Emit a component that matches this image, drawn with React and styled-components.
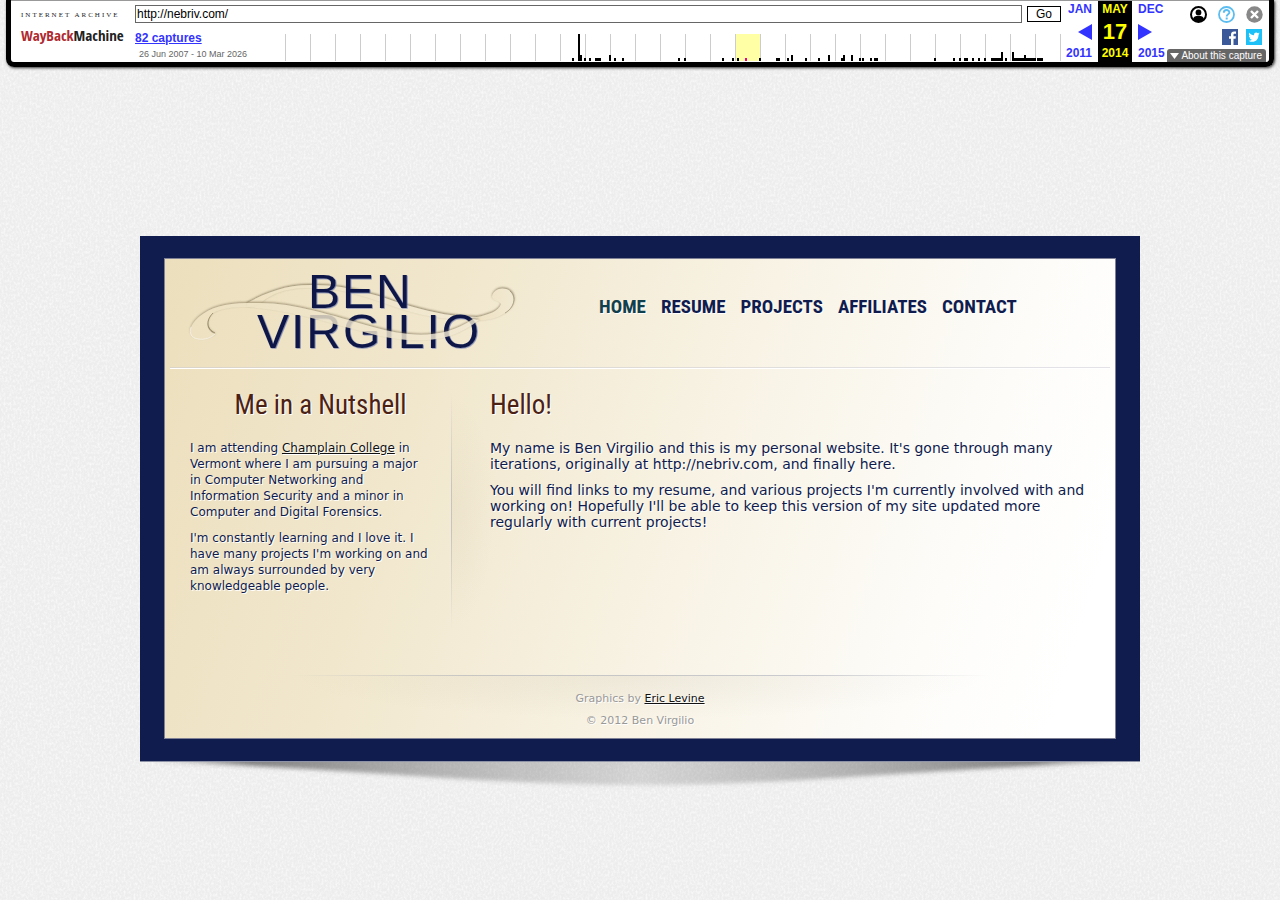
import styled, { createGlobalStyle, css } from "styled-components";

const GlobalStyle = createGlobalStyle`
  * {
    box-sizing: border-box;
  }

  body {
    margin: 0;
    background: #ededed;
    color: #0f1b4c;
    font-family: Verdana, "DejaVu Sans", sans-serif;
    font-size: 12px;
    line-height: 16px;
  }
`;

const narrow = css`
  font-family: "Roboto Condensed", "Arial Narrow", sans-serif;
`;

const Page = styled.div`
  position: relative;
  min-height: 100vh;
  padding: 0 6px;
`;

const Paper = styled.svg`
  position: absolute;
  inset: 0;
  width: 100%;
  height: 100%;
  z-index: -1;
`;

/* ---------- archive toolbar ---------- */

const Toolbar = styled.header`
  display: flex;
  height: 67px;
  padding: 1px 0 0 10px;
  border: solid #000;
  border-width: 0 5px 5px;
  border-radius: 0 0 8px 8px;
  background: linear-gradient(#999 1px, #fff 1px);
  box-shadow: 1px 1px 3px #333;
  color: #000;
  font-family: "Liberation Sans", Arial, sans-serif;
`;

const WaybackLogo = styled.a`
  width: 114px;
  padding-top: 10px;
  color: #222;
  text-decoration: none;
`;

const LogoTop = styled.span`
  display: block;
  font: 7px/8px "Liberation Serif", serif;
  letter-spacing: 2px;
  white-space: nowrap;
`;

const LogoName = styled.span`
  display: block;
  font-family: "Open Sans Condensed", "Roboto Condensed", sans-serif;
  font-size: 15px;
  font-weight: bold;
  line-height: 32px;
  white-space: nowrap;

  span {
    color: #b0292f;
  }
`;

const Middle = styled.div`
  flex: 1;
  min-width: 0;
`;

const UrlForm = styled.form`
  display: flex;
  gap: 5px;
  padding-top: 4px;
`;

const UrlInput = styled.input`
  flex: 1;
  min-width: 0;
  height: 18px;
  padding: 0 1px;
  border: 1px solid #666;
  font: 12px "Liberation Sans", Arial, sans-serif;
`;

const GoButton = styled.button`
  width: 34px;
  height: 16px;
  margin-top: 1px;
  padding: 0;
  border: 1px solid #000;
  background: #fff;
  font: 12px/14px "Liberation Sans", Arial, sans-serif;
`;

const CaptureRow = styled.div`
  display: flex;
  justify-content: space-between;
  padding-top: 7px;
`;

const Captures = styled.div`
  white-space: nowrap;

  a {
    display: block;
    color: #33f;
    font-size: 12px;
    font-weight: bold;
  }

  span {
    display: block;
    padding-left: 4px;
    color: #666;
    font-size: 9px;
  }
`;

const Spark = styled.svg`
  display: block;
  margin-top: 4px;
`;

const Calendar = styled.nav`
  display: flex;
  font-size: 12px;
  font-weight: bold;
  text-align: center;
`;

const CalColumn = styled.div`
  display: flex;
  flex-direction: column;
  justify-content: space-between;
  align-items: ${(p) => p.$align || "center"};
  width: ${(p) => p.$width}px;
  padding: 0 ${(p) => p.$pad || 0}px;
  background: ${(p) => (p.$active ? "#000" : "transparent")};
  color: ${(p) => (p.$active ? "#ff0" : "#33f")};

  a {
    color: inherit;
    text-decoration: none;
    line-height: 17px;
  }

  strong {
    font-size: 22px;
    line-height: 24px;
  }

  svg {
    display: block;
  }
`;

const Tools = styled.div`
  display: flex;
  flex-direction: column;
  align-items: flex-end;
  width: 101px;
  padding-right: 3px;
`;

const ToolRow = styled.div`
  display: flex;
  gap: ${(p) => p.$gap}px;
  padding: ${(p) => p.$top}px ${(p) => p.$right}px 0 0;

  a,
  button {
    display: block;
    padding: 0;
    border: 0;
    background: none;
  }

  svg {
    display: block;
  }
`;

const AboutButton = styled.button`
  display: flex;
  align-items: center;
  gap: 2px;
  height: 13px;
  margin-top: 4px;
  padding: 0 4px 0 3px;
  border: 0;
  border-radius: 3px 3px 0 0;
  background: #666;
  color: #fff;
  font: 10px/13px "Liberation Sans", Arial, sans-serif;
  white-space: nowrap;
`;

/* ---------- site ---------- */

const Site = styled.div`
  max-width: 1000px;
  margin: 169px auto 0;
`;

const Frame = styled.div`
  padding: 22px 24px;
  background: #101c4e;
  border-bottom: 1px solid #8f93a8;
`;

const Card = styled.div`
  border: 1px solid #7f8196;
  background: linear-gradient(
    108deg,
    #ecdfbd 0%,
    #f1e7cd 27%,
    #f8f3e5 56%,
    #fdfcf9 80%,
    #fff 94%
  );
`;

const SiteHeader = styled.header`
  display: flex;
  align-items: flex-start;
  height: 110px;
  margin: 0 5px;
  border-bottom: 1px solid #fff;
  box-shadow: inset 0 -1px 0 rgba(200, 200, 210, 0.5);
`;

const LogoLink = styled.a`
  width: 429px;
  padding: 6px 0 0 10px;

  svg {
    display: block;
  }
`;

const SiteNav = styled.nav`
  display: flex;
  gap: 15px;
  padding-top: 36px;
`;

const NavLink = styled.a`
  ${narrow}
  color: ${(p) => (p.$current ? "#123f4c" : "#101c4e")};
  font-size: 19px;
  font-weight: bold;
  line-height: 24px;
  text-decoration: none;
  text-shadow: 1px 1px 0 #fff;
`;

const Columns = styled.div`
  display: grid;
  grid-template-columns: 286px 1fr;
  min-height: 306px;
`;

const Sidebar = styled.aside`
  padding: 20px 0 0 25px;

  p {
    padding-right: 20px;
  }
`;

const Main = styled.main`
  padding: 20px 20px 0 39px;
  font-size: 14px;
  background:
    linear-gradient(transparent, rgba(160, 165, 180, 0.5) 40%, rgba(160, 165, 180, 0.5) 60%, transparent)
      0 24px / 1px 236px no-repeat,
    radial-gradient(closest-side, rgba(120, 100, 70, 0.05), transparent) -44px 24px / 88px 236px
      no-repeat;
`;

const Title = styled.h2`
  ${narrow}
  margin: 0 0 19px;
  color: #4a2114;
  font-size: 27px;
  font-weight: normal;
  line-height: 32px;
  text-align: ${(p) => p.$align || "left"};
  text-shadow: 1px 1px 0 #fff;
`;

const Text = styled.p`
  margin: 0 0 10px;
  line-height: 16px;
  text-shadow: 1px 1px 0 #fff;

  a {
    color: #111;
  }
`;

const Footer = styled.footer`
  padding: 16px 0 3px;
  color: #999;
  font-size: 11px;
  text-align: center;
  background:
    linear-gradient(90deg, transparent, rgba(160, 165, 180, 0.5) 25%, rgba(160, 165, 180, 0.5) 75%, transparent)
      50% 0 / 700px 1px no-repeat,
    radial-gradient(closest-side, rgba(120, 110, 90, 0.08), transparent) 50% -44px / 700px 88px
      no-repeat;

  p {
    margin: 0 0 6px;
    text-shadow: 1px 1px 0 #fff;
  }

  a {
    color: #111;
  }
`;

const Shadow = styled.svg`
  display: block;
  width: 100%;
  height: 34px;
`;

// x, width, height of each bar in the capture chart
const bars = [
  [287, 2, 3], [293, 2, 27], [295, 2, 6], [299, 2, 3], [304, 2, 3], [310, 6, 3],
  [324, 2, 6], [329, 2, 3], [337, 2, 3], [393, 2, 3], [399, 2, 3], [437, 2, 3],
  [447, 2, 3], [452, 2, 3], [474, 2, 3], [491, 4, 3], [502, 2, 3], [506, 2, 6],
  [520, 2, 3], [533, 2, 3], [543, 2, 6], [556, 2, 3], [558, 2, 6], [566, 2, 6],
  [574, 2, 3], [577, 2, 3], [585, 2, 3], [589, 4, 3], [649, 2, 3], [668, 2, 3],
  [674, 2, 3], [679, 4, 3], [687, 2, 3], [693, 2, 3], [699, 2, 3], [706, 10, 3],
  [716, 2, 9], [720, 2, 3], [727, 2, 9], [729, 10, 3], [739, 2, 6], [741, 10, 3],
  [752, 6, 3],
];

const years = Array.from({ length: 32 }, (_, i) => i * 25);

const links = ["HOME", "RESUME", "PROJECTS", "AFFILIATES", "CONTACT"];

function Sparkline() {
  return (
    <Spark width="776" height="27" shapeRendering="crispEdges" aria-hidden="true">
      <rect x="450" width="25" height="27" fill="#ffffa5" />
      {years.map((x) => (
        <rect key={x} x={x} width="1" height="27" fill="#ccc" />
      ))}
      {bars.map(([x, w, h]) => (
        <rect key={x} x={x} y={27 - h} width={w} height={h} />
      ))}
      <rect x="460" y="24" width="2" height="3" fill="#ec008c" />
    </Spark>
  );
}

function WaybackToolbar() {
  return (
    <Toolbar>
      <WaybackLogo href="#wayback">
        <LogoTop>INTERNET ARCHIVE</LogoTop>
        <LogoName>
          <span>WayBack</span>Machine
        </LogoName>
      </WaybackLogo>
      <Middle>
        <UrlForm onSubmit={(e) => e.preventDefault()}>
          <UrlInput type="text" aria-label="URL" defaultValue="http://nebriv.com/" />
          <GoButton type="submit">Go</GoButton>
        </UrlForm>
        <CaptureRow>
          <Captures>
            <a href="#captures">82 captures</a>
            <span>26 Jun 2007 - 10 Mar 2026</span>
          </Captures>
          <Sparkline />
        </CaptureRow>
      </Middle>
      <Calendar>
        <CalColumn $width={37} $align="flex-end" $pad={6}>
          <a href="#jan">JAN</a>
          <a href="#prev" aria-label="Previous capture">
            <svg width="14" height="16" viewBox="0 0 14 16">
              <path d="M14 0v16L0 8z" fill="#33f" />
            </svg>
          </a>
          <a href="#2011">2011</a>
        </CalColumn>
        <CalColumn $width={34} $active>
          <a href="#may">MAY</a>
          <strong>17</strong>
          <a href="#2014">2014</a>
        </CalColumn>
        <CalColumn $width={36} $align="flex-start" $pad={6}>
          <a href="#dec">DEC</a>
          <a href="#next" aria-label="Next capture">
            <svg width="14" height="16" viewBox="0 0 14 16">
              <path d="M0 0v16l14-8z" fill="#33f" />
            </svg>
          </a>
          <a href="#2015">2015</a>
        </CalColumn>
      </Calendar>
      <Tools>
        <ToolRow $gap={11} $top={5} $right={3}>
          <a href="#login" aria-label="Log in">
            <svg width="17" height="17" viewBox="0 0 17 17">
              <circle cx="8.5" cy="8.5" r="7.5" fill="#fff" stroke="#000" strokeWidth="2" />
              <circle cx="8.5" cy="6.4" r="2.9" />
              <path d="M3 13.2c.6-2.4 2.4-3.4 5.5-3.4s4.9 1 5.5 3.4c-3 3-8 3-11 0z" />
            </svg>
          </a>
          <a href="#help" aria-label="Help">
            <svg width="17" height="17" viewBox="0 0 17 17" fill="none" stroke="#5bbcf0">
              <circle cx="8.5" cy="8.5" r="7.5" strokeWidth="1.8" />
              <path d="M5.8 6.7c0-3.6 5.6-3.4 5.6-.3 0 1.9-2.7 1.9-2.7 4" strokeWidth="1.9" />
              <path d="M7.7 12.5h2" strokeWidth="2" />
            </svg>
          </a>
          <button type="button" aria-label="Close">
            <svg width="17" height="17" viewBox="0 0 17 17">
              <circle cx="8.5" cy="8.5" r="8.2" fill="#888" />
              <path d="M5 5l7 7M12 5l-7 7" stroke="#fff" strokeWidth="2.4" />
            </svg>
          </button>
        </ToolRow>
        <ToolRow $gap={8} $top={6} $right={4}>
          <a href="#facebook" aria-label="Facebook">
            <svg width="16" height="16" viewBox="0 0 16 16">
              <path d="M0 0h16v16H0z" fill="#3b5998" />
              <path
                d="M9 16V9.700H7V7.300h2V5.600C9 3.500 10.200 2.400 12 2.400l2 .1v2.200h-1.300c-1 0-1.200.5-1.200 1.200v1.400h2.400l-.3 2.400h-2.100V16z"
                fill="#fff"
              />
            </svg>
          </a>
          <a href="#twitter" aria-label="Twitter">
            <svg width="16" height="16" viewBox="0 0 16 16">
              <path d="M0 0h16v16H0z" fill="#1dc1f7" />
              <path
                d="M13.700 4.500l-1.300.4c.5-.3.800-.8 1-1.300l-1.500.6c-1.500-1.600-4.300-.4-3.900 2-2 0-3.600-1-4.800-2.400-.7 1.200-.3 2.500.7 3.200l-1-.3c0 1.200.8 2.100 1.900 2.400h-1c.3.900 1.100 1.600 2.200 1.600-1 .8-2.200 1.100-3.500 1 5 3 10.200-.1 10-5.900z"
                fill="#fff"
              />
            </svg>
          </a>
        </ToolRow>
        <AboutButton type="button">
          <svg width="9" height="6" viewBox="0 0 9 6">
            <path d="M0 0h9L4.500 6z" fill="#fff" />
          </svg>
          About this capture
        </AboutButton>
      </Tools>
    </Toolbar>
  );
}

function BenLogo() {
  return (
    <svg width="340" height="90" viewBox="0 0 340 90" role="img" aria-label="Ben Virgilio">
      <defs>
        <filter id="bevel" x="-5%" y="-20%" width="110%" height="140%">
          <feDropShadow dx=".8" dy=".6" stdDeviation=".5" floodColor="#5564a8" floodOpacity=".8" />
        </filter>
        <filter id="soft" x="-10%" y="-20%" width="120%" height="140%">
          <feDropShadow dx=".3" dy="-1" stdDeviation=".9" floodColor="#6d6140" floodOpacity=".75" />
        </filter>
        <linearGradient id="ribbon">
          <stop offset="0" stopColor="#eee2c2" />
          <stop offset="1" stopColor="#f2e9d3" />
        </linearGradient>
      </defs>
      <g fill="url(#ribbon)" filter="url(#soft)">
        <path d="M67 38C85 28 105 20 130 20c40-1 70 12 100 21 25 7 45 11 67 11v2c-27 2-52-2-79-11-28-10-58-21-88-20-25 0-38 6-48 14-6 4-10 5-15 5z" />
        <path d="M297 52c11-2 22-6 24-13-2-4-7-2-9-7 1-8 11-11 18-6 7 6 4 17-5 22-9 6-18 7-28 8z" />
      </g>
      <g
        fill="#0e1847"
        fontFamily="Liberation Sans, Arial, sans-serif"
        fontSize="48"
        letterSpacing="2"
        filter="url(#bevel)"
      >
        <text x="128" y="43">BEN</text>
        <text x="77" y="83">VIRGILIO</text>
      </g>
      <g fill="url(#ribbon)" filter="url(#soft)" opacity=".82">
        <path d="M80 38c35 0 70 12 113 24 32 9 69 14 100-8l6 1c-29 23-59 23-94 17-45-10-85-26-138-30-14 0-25 1-34 6-8 7-8 17 2 21-4 4-10 6-17 5-11-2-10-13 2-23 10-8 25-13 47-13z" />
      </g>
      <path d="M35 68c-9-4-9-13-2-20" fill="none" stroke="#6d6140" strokeOpacity=".55" />
      <path d="M35 69c-4 4-10 6-17 5-7-1-9-6-7-12" fill="none" stroke="#fff" strokeOpacity=".55" />
      <path d="M330 26c7 6 4 17-5 22" fill="none" stroke="#6d6140" strokeOpacity=".45" />
    </svg>
  );
}

const App = () => {
  return (
    <Page>
      <GlobalStyle />
      <Paper aria-hidden="true">
        <filter id="grain">
          <feTurbulence type="fractalNoise" baseFrequency=".5 .35" numOctaves="3" seed="4" />
          <feColorMatrix values="0 0 0 0 1  0 0 0 0 1  0 0 0 0 1  1.4 0 0 0 -.55" />
        </filter>
        <rect width="100%" height="100%" filter="url(#grain)" />
      </Paper>
      <WaybackToolbar />
      <Site>
        <Frame>
          <Card>
            <SiteHeader>
              <LogoLink href="#home">
                <BenLogo />
              </LogoLink>
              <SiteNav>
                {links.map((link) => (
                  <NavLink key={link} href={`#${link.toLowerCase()}`} $current={link === "HOME"}>
                    {link}
                  </NavLink>
                ))}
              </SiteNav>
            </SiteHeader>
            <Columns>
              <Sidebar>
                <Title $align="center">Me in a Nutshell</Title>
                <Text>
                  I am attending <a href="#champlain">Champlain College</a> in Vermont where I am
                  pursuing a major in Computer Networking and Information Security and a minor in
                  Computer and Digital Forensics.
                </Text>
                <Text>
                  I'm constantly learning and I love it. I have many projects I'm working on and am
                  always surrounded by very knowledgeable people.
                </Text>
              </Sidebar>
              <Main>
                <Title>Hello!</Title>
                <Text>
                  My name is Ben Virgilio and this is my personal website. It's gone through many
                  iterations, originally at http://nebriv.com, and finally here.
                </Text>
                <Text>
                  You will find links to my resume, and various projects I'm currently involved with
                  and working on! Hopefully I'll be able to keep this version of my site updated
                  more regularly with current projects!
                </Text>
              </Main>
            </Columns>
            <Footer>
              <p>
                Graphics by <a href="#eric">Eric Levine</a>
              </p>
              <p>© 2012 Ben Virgilio</p>
            </Footer>
          </Card>
        </Frame>
        <Shadow viewBox="0 0 1000 34" preserveAspectRatio="none" aria-hidden="true">
          <defs>
            <linearGradient id="fade">
              <stop offset="0" stopColor="#444" stopOpacity="0" />
              <stop offset=".1" stopColor="#444" stopOpacity=".65" />
              <stop offset=".28" stopColor="#555" stopOpacity=".4" />
              <stop offset=".5" stopColor="#666" stopOpacity=".2" />
              <stop offset=".72" stopColor="#555" stopOpacity=".4" />
              <stop offset=".9" stopColor="#444" stopOpacity=".65" />
              <stop offset="1" stopColor="#444" stopOpacity="0" />
            </linearGradient>
            <filter id="blur" x="0" width="100%" y="-40%" height="180%">
              <feGaussianBlur stdDeviation="4 2" />
            </filter>
          </defs>
          <path
            d="M10-8V0C200 5 340 23 500 23S800 5 990 0v-8z"
            fill="url(#fade)"
            filter="url(#blur)"
          />
        </Shadow>
      </Site>
    </Page>
  );
};

export default App;
